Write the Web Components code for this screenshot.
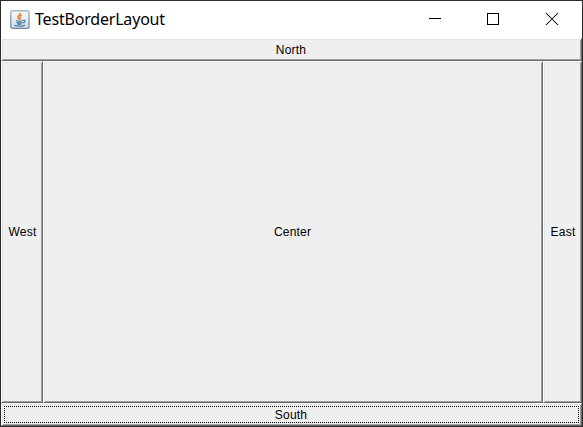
<!DOCTYPE html>
<html lang="en">
<head>
<meta charset="utf-8">
<title>TestBorderLayout</title>
<style>
html,body{margin:0;height:100%;overflow:hidden}
</style>
</head>
<body>
<awt-frame>
  <title-bar slot="title">TestBorderLayout</title-bar>
  <awt-button slot="north">North</awt-button>
  <awt-button slot="west">West</awt-button>
  <awt-button slot="center">Center</awt-button>
  <awt-button slot="east">East</awt-button>
  <awt-button slot="south" focused>South</awt-button>
</awt-frame>
<script>
class AwtFrame extends HTMLElement {
  constructor() {
    super();
    this.attachShadow({mode: 'open'}).innerHTML = `
<style>
:host{display:grid;box-sizing:border-box;width:583px;height:427px;border:1px solid #2d2a2d;background:#fff;
grid-template-rows:37px 23px 1fr 23px;grid-template-columns:42px 1fr 39px}
slot[name=title]::slotted(*),slot[name=north]::slotted(*),slot[name=south]::slotted(*){grid-column:1/-1}
slot[name=west]::slotted(*),slot[name=east]::slotted(*){--label-pad:0 0 0 1px;--label-spacing:.25px}
</style>
<slot name="title"></slot><slot name="north"></slot><slot name="west"></slot><slot name="center"></slot><slot name="east"></slot><slot name="south"></slot>`;
  }
}
class JavaIcon extends HTMLElement {
  constructor() {
    super();
    this.attachShadow({mode: 'open'}).innerHTML = `
<style>:host{display:block;width:20px;height:20px}svg{display:block}</style>
<svg width="20" height="20" viewBox="0 0 20 20" fill="none">
<defs><linearGradient id="g" x1="0" y1="0" x2="0" y2="1"><stop offset="0" stop-color="#f4f6f8"/><stop offset=".5" stop-color="#e9eef2"/><stop offset="1" stop-color="#cfdae3"/></linearGradient>
<linearGradient id="b" x1="0" y1="0" x2="0" y2="1"><stop offset="0" stop-color="#a9b7c3"/><stop offset="1" stop-color="#6b8ba6"/></linearGradient></defs>
<rect x=".8" y=".8" width="18.2" height="17.6" rx="1.8" fill="url(#g)" stroke="url(#b)" stroke-width="1.4"/>
<path d="M10.300 2.800c.8 2-3.200 2.800-2.400 4.800.2.900 1 1.300 1.500 2.200M11.800 5c-1.800.8-2.600 1.600-1.700 2.800.5.700.3 1.200-.1 1.700" stroke="#ea8a40" stroke-width="1.600"/>
<path d="M5.800 10.500c1.500.7 5.500.6 7.400 0M6.400 12.300c1.500.5 4.200.5 6 0M7 13.900c1.300.4 3.300.4 4.600 0M13.300 10.300c2.300-.6 2.300 1.800-.4 2.700M4.300 15.200c1.300 1.300 9 1.200 10.700-.2" stroke="#4f7fa5" stroke-width="1.250"/>
</svg>`;
  }
}
class TitleBar extends HTMLElement {
  constructor() {
    super();
    this.attachShadow({mode: 'open'}).innerHTML = `
<style>
:host{display:flex;align-items:center;background:#fff;color:#000;font:16px/22px "Noto Sans","Open Sans",sans-serif}
java-icon{margin-left:9px}
.t{margin-left:5px;padding-bottom:2px;flex:1;white-space:nowrap;letter-spacing:-.19px}
svg{display:block;flex:none}
</style>
<java-icon></java-icon><span class="t"><slot></slot></span>
<svg width="153" height="37" viewBox="429 1 153 37" fill="none" stroke="#000" shape-rendering="crispEdges">
<path d="M429 18.500h12M487.500 13.500h11v11h-11z"/>
<path d="M546 13l12 12M558 13l-12 12" shape-rendering="geometricPrecision" stroke-width="1.050"/>
</svg>`;
  }
}
class AwtButton extends HTMLElement {
  constructor() {
    super();
    this.attachShadow({mode: 'open'}).innerHTML = `
<style>
:host{position:relative;display:flex;align-items:center;justify-content:center;box-sizing:border-box;min-width:0;min-height:0;
background:#efefef;border:1px solid;border-color:#fff #696969 #696969 #fff;
box-shadow:inset 1px 1px #e3e3e3,inset -1px -1px #a0a0a0;
font:12px/14px "Liberation Sans",Arial,sans-serif;letter-spacing:var(--label-spacing,.2px);color:#000}
.label{padding:var(--label-pad,0 1px 0 0)}
.focus{display:none;position:absolute;inset:2px;
--h:repeating-linear-gradient(90deg,#000 0 1px,transparent 1px 2px);--v:repeating-linear-gradient(#000 0 1px,transparent 1px 2px);
background:var(--h) top/100% 1px no-repeat,var(--h) bottom/100% 1px no-repeat,var(--v) left/1px 100% no-repeat,var(--v) right/1px 100% no-repeat}
:host([focused]) .focus{display:block}
</style>
<span class="label"><slot></slot></span><div class="focus"></div>`;
  }
}
customElements.define('java-icon', JavaIcon);
customElements.define('title-bar', TitleBar);
customElements.define('awt-button', AwtButton);
customElements.define('awt-frame', AwtFrame);
</script>
</body>
</html>
